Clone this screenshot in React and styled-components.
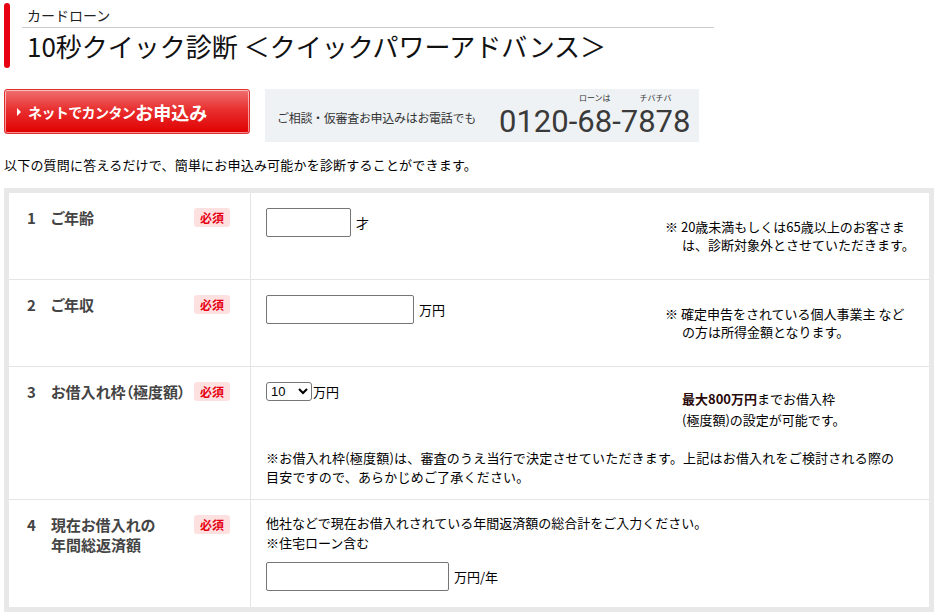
import React from "react";
import styled, { createGlobalStyle } from "styled-components";

const Global = createGlobalStyle`
  html, body { margin: 0; padding: 0; background: #fff; }
  body {
    font-family: "Noto Sans CJK JP", "Noto Sans", sans-serif;
    color: #000;
    font-size: 13px;
  }
`;

const Page = styled.div`
  padding: 3px 2px 0 4px;
  width: 930px;
`;

const Header = styled.header`
  display: flex;
  width: 710px;
  height: 65px;
`;

const RedBar = styled.div`
  width: 6px;
  background: #e60012;
  border-radius: 3px;
  flex: none;
`;

const HeaderBody = styled.div`
  flex: 1;
  margin-left: 12px;
  display: flex;
  flex-direction: column;
`;

const SubLabel = styled.div`
  height: 24px;
  line-height: 25px;
  padding-left: 5px;
  font-size: 14px;
  color: #222;
  border-bottom: 1px solid #cccccc;
`;

const Title = styled.h1`
  margin: 0;
  padding-left: 5px;
  font-size: 26px;
  font-weight: 400;
  line-height: 36px;
  height: 40px;
  color: #111;
  white-space: nowrap;
`;

const CtaRow = styled.div`
  display: flex;
  align-items: flex-start;
  gap: 15px;
  margin-top: 21px;
`;

const ApplyButton = styled.a`
  box-sizing: border-box;
  width: 246px;
  height: 45px;
  display: flex;
  align-items: center;
  padding-left: 12px;
  border: 1px solid #e23030;
  border-radius: 3px;
  box-shadow: inset 0 0 0 1px rgba(255, 255, 255, 0.55);
  background: linear-gradient(#f07070 0%, #e83030 45%, #e10000 100%);
  color: #fff;
  text-decoration: none;
  font-weight: 700;
  white-space: nowrap;
  cursor: pointer;
`;

const Arrow = styled.span`
  width: 0;
  height: 0;
  border-left: 4px solid #fff;
  border-top: 4px solid transparent;
  border-bottom: 4px solid transparent;
  margin-right: 7px;
`;

const BtnText = styled.span`
  font-size: ${(p) => (p.$big ? "18px" : "14px")};
  letter-spacing: ${(p) => (p.$big ? "0" : "-0.6px")};
  line-height: 20px;
`;

const PhoneBox = styled.div`
  box-sizing: border-box;
  width: 434px;
  height: 53px;
  background: #eef2f5;
  display: flex;
  align-items: center;
  padding-left: 12px;
`;

const PhoneLead = styled.span`
  font-size: 12px;
  color: #333;
  letter-spacing: -0.3px;
  margin-top: 4px;
  width: 222px;
  flex: none;
`;

const PhoneNumber = styled.div`
  display: flex;
  align-items: flex-end;
  font-family: Roboto, "Noto Sans", sans-serif;
  font-weight: 400;
  font-size: 31px;
  color: #3a3a3a;
  line-height: 32px;
`;

const Seg = styled.span`
  display: flex;
  flex-direction: column;
  align-items: center;
`;

const Ruby = styled.span`
  font-family: "Noto Sans CJK JP", sans-serif;
  font-size: 8px;
  line-height: 10px;
  height: 10px;
  margin-bottom: 3px;
  color: #333;
  white-space: nowrap;
`;

const Intro = styled.p`
  margin: 14px 0 0;
  font-size: 13px;
  line-height: 18px;
  letter-spacing: 0.2px;
`;

const Table = styled.div`
  margin-top: 14px;
  border: 5px solid #e8e8e8;
  background: #fff;
`;

const Row = styled.div`
  display: grid;
  grid-template-columns: 242px 1fr;
  min-height: ${(p) => p.$minH || 0}px;
  border-bottom: ${(p) => (p.$last ? "none" : "1px solid #e5e5e5")};
`;

const LabelCell = styled.div`
  border-right: 1px solid #e5e5e5;
  padding: 15px 20px 0 18px;
  display: flex;
  align-items: flex-start;
`;

const Num = styled.span`
  width: 24px;
  flex: none;
  font-size: 15px;
  font-weight: 700;
  color: #444;
  line-height: 20px;
`;

const LabelText = styled.span`
  flex: 1;
  font-size: 15px;
  font-weight: 700;
  color: #444;
  line-height: 20px;
  font-feature-settings: "palt";
  white-space: nowrap;
`;

const Badge = styled.span`
  flex: none;
  width: 36px;
  height: 19px;
  border-radius: 3px;
  background: #fde1e1;
  color: #e60012;
  font-size: 12px;
  font-weight: 700;
  line-height: 19px;
  text-align: center;
`;

const FieldCell = styled.div`
  padding: ${(p) => p.$pt ?? 15}px 15px ${(p) => p.$pb ?? 15}px;
  display: flex;
  flex-direction: ${(p) => (p.$column ? "column" : "row")};
  align-items: ${(p) => (p.$column ? "stretch" : "flex-start")};
`;

const InputGroup = styled.div`
  flex: 1;
  display: flex;
  align-items: center;
  margin-top: ${(p) => p.$mt || 0}px;
`;

const TextInput = styled.input`
  box-sizing: border-box;
  width: ${(p) => p.$w}px;
  height: 29px;
  border: 1px solid #767676;
  border-radius: 2px;
  padding: 0 4px;
  font-size: 13px;
`;

const Unit = styled.span`
  margin-left: ${(p) => p.$gap ?? 5}px;
  font-size: 13px;
  line-height: 18px;
`;

const Note = styled.p`
  margin: 0;
  width: 249px;
  flex: none;
  align-self: center;
  padding-left: 17px;
  text-indent: -17px;
  box-sizing: border-box;
  font-size: 13px;
  line-height: 18px;
  white-space: nowrap;
`;

const TopLine = styled.div`
  display: flex;
  align-items: flex-start;
`;

const Select = styled.select`
  box-sizing: border-box;
  width: 46px;
  height: 19px;
  font-size: 13px;
  padding: 0;
  border: 1px solid #767676;
  border-radius: 3px;
  background: #fff;
`;

const Info = styled.p`
  margin: 6px 0 0;
  width: 249px;
  box-sizing: border-box;
  padding-left: 17px;
  font-size: 13px;
  line-height: 21px;
`;

const Strong = styled.strong`
  font-weight: 700;
  color: #2a0a0a;
`;

const Paragraph = styled.p`
  margin: ${(p) => p.$mt || 0}px 0 0;
  font-size: 13px;
  line-height: ${(p) => p.$lh || 19}px;
  letter-spacing: ${(p) => p.$ls || 0}px;
`;

export default function App() {
  return (
    <>
      <Global />
      <Page>
        <Header>
          <RedBar />
          <HeaderBody>
            <SubLabel>カードローン</SubLabel>
            <Title>10秒クイック診断 ＜クイックパワーアドバンス＞</Title>
          </HeaderBody>
        </Header>

        <CtaRow>
          <ApplyButton>
            <Arrow />
            <BtnText>ネットでカンタン</BtnText>
            <BtnText $big>お申込み</BtnText>
          </ApplyButton>
          <PhoneBox>
            <PhoneLead>ご相談・仮審査お申込みはお電話でも</PhoneLead>
            <PhoneNumber>
              <Seg>0120-</Seg>
              <Seg>
                <Ruby>ローンは</Ruby>
                <span>68</span>
              </Seg>
              <Seg>-</Seg>
              <Seg>
                <Ruby>チバチバ</Ruby>
                <span>7878</span>
              </Seg>
            </PhoneNumber>
          </PhoneBox>
        </CtaRow>

        <Intro>以下の質問に答えるだけで、簡単にお申込み可能かを診断することができます。</Intro>

        <Table>
          <Row $minH={86}>
            <LabelCell>
              <Num>1</Num>
              <LabelText>ご年齢</LabelText>
              <Badge>必須</Badge>
            </LabelCell>
            <FieldCell>
              <InputGroup>
                <TextInput $w={85} />
                <Unit>才</Unit>
              </InputGroup>
              <Note>
                ※ 20歳未満もしくは65歳以上のお客さま
                <br />
                は、診断対象外とさせていただきます。
              </Note>
            </FieldCell>
          </Row>

          <Row $minH={86}>
            <LabelCell>
              <Num>2</Num>
              <LabelText>ご年収</LabelText>
              <Badge>必須</Badge>
            </LabelCell>
            <FieldCell>
              <InputGroup>
                <TextInput $w={148} />
                <Unit>万円</Unit>
              </InputGroup>
              <Note>
                ※ 確定申告をされている個人事業主 など
                <br />
                の方は所得金額となります。
              </Note>
            </FieldCell>
          </Row>

          <Row>
            <LabelCell>
              <Num>3</Num>
              <LabelText>お借入れ枠（極度額）</LabelText>
              <Badge>必須</Badge>
            </LabelCell>
            <FieldCell $column $pb={13}>
              <TopLine>
                <InputGroup>
                  <Select defaultValue="10">
                    <option value="10">10</option>
                    <option value="20">20</option>
                    <option value="30">30</option>
                    <option value="50">50</option>
                    <option value="100">100</option>
                  </Select>
                  <Unit $gap={1}>万円</Unit>
                </InputGroup>
                <Info>
                  <Strong>最大800万円</Strong>までお借入枠
                  <br />
                  (極度額)の設定が可能です。
                </Info>
              </TopLine>
              <Paragraph $mt={18} $ls={0.2}>
                ※お借入れ枠(極度額)は、審査のうえ当行で決定させていただきます。上記はお借入れをご検討される際の
                <br />
                目安ですので、あらかじめご了承ください。
              </Paragraph>
            </FieldCell>
          </Row>

          <Row $last>
            <LabelCell>
              <Num>4</Num>
              <LabelText>
                現在お借入れの
                <br />
                年間総返済額
              </LabelText>
              <Badge>必須</Badge>
            </LabelCell>
            <FieldCell $column $pt={13} $pb={16}>
              <Paragraph $lh={20}>
                他社などで現在お借入れされている年間返済額の総合計をご入力ください。
                <br />
                ※住宅ローン含む
              </Paragraph>
              <InputGroup $mt={9}>
                <TextInput $w={183} />
                <Unit>万円/年</Unit>
              </InputGroup>
            </FieldCell>
          </Row>
        </Table>
      </Page>
    </>
  );
}
